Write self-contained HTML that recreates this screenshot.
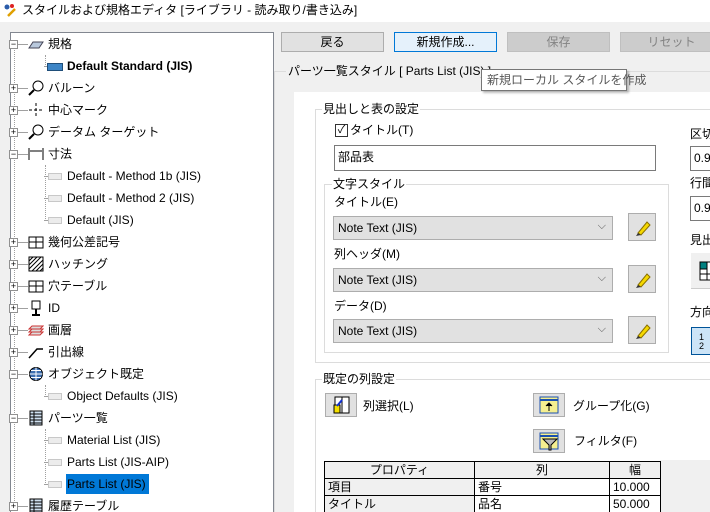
<!DOCTYPE html>
<html><head><meta charset="utf-8"><style>
*{box-sizing:border-box;margin:0;padding:0}
html,body{width:710px;height:512px;overflow:hidden}
body{background:#f0f0f0;font-family:"Liberation Sans","Noto Sans CJK JP",sans-serif;font-size:12px;color:#000;position:relative}
.a{position:absolute;white-space:nowrap;line-height:18px}
.tree{position:absolute;left:10px;top:32px;width:264px;height:480px;background:#fff;border:1px solid #828790;border-bottom:none}
.pm{position:absolute;width:9px;height:9px;border:1px solid #919191;background:#fff;font-size:9px;line-height:7px;text-align:center;color:#000}
.vl{position:absolute;border-left:1px dotted #a0a0a0}
.hl{position:absolute;border-top:1px solid #a0a0a0;height:0}
.leaf{position:absolute;width:14px;height:7px;border:1px solid #c8c8c8;background:#ececec}
.btn{position:absolute;top:32px;height:20px;border:1px solid #adadad;background:#e1e1e1;text-align:center;line-height:18px}
.cb{position:absolute;height:24px;border:1px solid #adadad;background:#e1e1e1;line-height:22px;padding-left:4px}
.cb:after{content:"⌵";position:absolute;right:6px;top:-2px;color:#555;font-size:11px}
.pb{position:absolute;width:28px;height:28px;border:1px solid #adadad;background:#e1e1e1}
.inp{position:absolute;border:1px solid #7a7a7a;background:#fff;line-height:22px;padding-left:3px}
.grp{position:absolute;border:1px solid #dcdcdc}
.lab{position:absolute;background:#fff;padding:0 1px;white-space:nowrap;line-height:16px}
td{border:1px solid #000;height:17px;line-height:15px;padding:0 3px;font-size:12px}
</style></head><body>
<div class="a" style="left:0;top:0;width:710px;height:22px;background:#fff"></div>
<div class="a" style="left:3px;top:3px;width:14px;height:14px"><svg width="14" height="14"><circle cx="4" cy="4" r="2.5" fill="#2a5caa"/><circle cx="9" cy="3" r="2" fill="#d22"/><path d="M5 13 L12 6" stroke="#e0a000" stroke-width="2.5"/></svg></div>
<div class="a" style="left:22px;top:1px;font-size:12px">スタイルおよび規格エディタ [ライブラリ - 読み取り/書き込み]</div>

<div class="tree">
<div class="vl" style="left:3px;top:12px;height:478px"></div>
<div class="vl" style="left:34px;top:22px;height:12px"></div>
<div class="vl" style="left:34px;top:132px;height:56px"></div>
<div class="vl" style="left:34px;top:352px;height:12px"></div>
<div class="vl" style="left:34px;top:396px;height:56px"></div>
</div>
<div id="t"></div>
<script>
var rows=[
[44,0,'m','規格','std'],[66,1,'','<b>Default Standard (JIS)</b>','blue'],[88,0,'p','バルーン','bal'],[110,0,'p','中心マーク','cm'],[132,0,'p','データム ターゲット','bal'],[154,0,'m','寸法','dim'],
[176,1,'','Default - Method 1b (JIS)'],[198,1,'','Default - Method 2 (JIS)'],[220,1,'','Default (JIS)'],[242,0,'p','幾何公差記号','g'],[264,0,'p','ハッチング','h'],[286,0,'p','穴テーブル','g'],[308,0,'p','ID','id'],[330,0,'p','画層','ly'],[352,0,'p','引出線','ld'],[374,0,'m','オブジェクト既定','gl'],[396,1,'','Object Defaults (JIS)'],[418,0,'m','パーツ一覧','pl'],[440,1,'','Material List (JIS)'],[462,1,'','Parts List (JIS-AIP)'],[484,1,'','Parts List (JIS)','sel'],[506,0,'p','履歴テーブル','pl']];
var h='';
rows.forEach(function(r){var y=r[0];
if(r[1]==0){h+='<div class="pm" style="left:9px;top:'+(y-4)+'px">'+(r[2]=='m'?'−':'+')+'</div><div class="hl" style="left:18px;top:'+y+'px;width:10px"></div>';
h+='<div class="a" style="left:28px;top:'+(y-8)+'px;width:16px;height:16px">'+icon(r[4])+'</div><div class="a" style="left:48px;top:'+(y-9)+'px">'+r[3]+'</div>';}
else{h+='<div class="hl" style="left:44px;top:'+y+'px;width:10px"></div>';
if(r[4]=='blue')h+='<div class="leaf" style="left:47px;top:'+(y-3)+'px;width:16px;height:8px;background:#3d85c6;border-color:#1f4e79"></div>';else h+='<div class="leaf" style="left:48px;top:'+(y-3)+'px"></div>';
if(r[4]=='sel')h+='<div class="a" style="left:66px;top:'+(y-10)+'px;width:83px;height:20px;background:#0078d7"></div><div class="a" style="left:67px;top:'+(y-9)+'px;color:#000">'+r[3]+'</div>';else h+='<div class="a" style="left:67px;top:'+(y-9)+'px">'+r[3]+'</div>';}
});
function icon(k){
if(k=='std')return '<svg width="16" height="16"><path d="M1 12 L5 6 L15 6 L11 12Z" fill="#b8c8dc" stroke="#445"/></svg>';
if(k=='bal')return '<svg width="16" height="16"><circle cx="10" cy="6" r="5" fill="#fff" stroke="#000"/><path d="M6 10 L1 15" stroke="#000" stroke-width="2"/></svg>';
if(k=='cm')return '<svg width="16" height="16"><path d="M8 1V15M1 8H15" stroke="#000" stroke-dasharray="3 2"/></svg>';
if(k=='dim')return '<svg width="16" height="16"><path d="M1 2V14M15 2V14M2 5H14" stroke="#000"/></svg>';
if(k=='g')return '<svg width="16" height="16"><rect x="1" y="3" width="14" height="11" fill="#fff" stroke="#000"/><path d="M8 3V14M1 8H15" stroke="#000"/></svg>';
if(k=='h')return '<svg width="16" height="16"><rect x="1" y="1" width="14" height="14" fill="#fff" stroke="#000"/><path d="M1 5L5 1M1 9L9 1M1 13L13 1M4 15L15 4M8 15L15 8M12 15L15 12" stroke="#000"/></svg>';
if(k=='id')return '<svg width="16" height="16"><rect x="4" y="1" width="8" height="8" fill="#fff" stroke="#000"/><path d="M8 9V14M4 15H12" stroke="#000" stroke-width="2"/></svg>';
if(k=='ly')return '<svg width="16" height="16"><path d="M1 13L4 10H15L12 13Z M1 10L4 7H15L12 10Z M1 7L4 4H15L12 7Z" fill="#ddd" stroke="#c33"/></svg>';
if(k=='ld')return '<svg width="16" height="16"><path d="M1 14L9 5H15" stroke="#000" stroke-width="1.5" fill="none"/></svg>';
if(k=='gl')return '<svg width="16" height="16"><circle cx="8" cy="8" r="6.5" fill="#3d6fb0" stroke="#000"/><path d="M1.5 8H14.5M8 1.5V14.5M3 4.5H13M3 11.5H13" stroke="#fff"/></svg>';
if(k=='pl')return '<svg width="16" height="16"><rect x="2" y="1" width="12" height="14" fill="#cfe0f0" stroke="#000"/><path d="M2 4H14M2 7H14M2 10H14M2 13H14M6 1V15" stroke="#000"/></svg>';
return '';}
document.getElementById('t').innerHTML=h;
</script>

<div class="btn" style="left:281px;width:103px">戻る</div>
<div class="btn" style="left:394px;width:103px;background:#e5f1fb;border-color:#0078d7">新規作成...</div>
<div class="btn" style="left:507px;width:103px;background:#ccc;border-color:#bfbfbf;color:#838383">保存</div>
<div class="btn" style="left:620px;width:103px;background:#ccc;border-color:#bfbfbf;color:#838383">リセット</div>

<div class="a" style="left:274px;top:71px;width:436px;border-top:1px solid #dcdcdc"></div>
<div class="a" style="left:274px;top:71px;height:441px;border-left:1px solid #dcdcdc"></div>
<div class="a" style="left:286px;top:63px;background:#f0f0f0;padding:0 2px;line-height:16px">パーツ一覧スタイル [ Parts List (JIS) ]</div>
<div class="a" style="left:294px;top:92px;width:416px;height:420px;background:#fff"></div>

<div class="grp" style="left:315px;top:109px;width:400px;height:254px"></div>
<div class="lab" style="left:322px;top:101px">見出しと表の設定</div>
<div class="a" style="left:335px;top:124px;width:13px;height:13px;border:1px solid #333;background:#fff;font-size:11px;line-height:11px;text-align:center">✓</div>
<div class="a" style="left:350px;top:121px">タイトル(T)</div>
<div class="inp" style="left:334px;top:145px;width:322px;height:26px">部品表</div>
<div class="grp" style="left:324px;top:184px;width:345px;height:169px"></div>
<div class="lab" style="left:332px;top:176px">文字スタイル</div>
<div class="a" style="left:334px;top:193px">タイトル(E)</div>
<div class="cb" style="left:333px;top:216px;width:280px">Note Text (JIS)</div>
<div class="a" style="left:334px;top:245px">列ヘッダ(M)</div>
<div class="cb" style="left:333px;top:268px;width:280px">Note Text (JIS)</div>
<div class="a" style="left:334px;top:297px">データ(D)</div>
<div class="cb" style="left:333px;top:319px;width:280px">Note Text (JIS)</div>
<div id="pens"></div>
<script>
var p='';[213,265,316].forEach(function(y){p+='<div class="pb" style="left:628px;top:'+y+'px"><svg width="26" height="26"><path d="M9 19 L18 8 L21 11 L12 21Z" fill="#f5d800" stroke="#8a7000"/><path d="M7 22 L9 19 L12 21Z" fill="#333"/></svg></div>'});document.getElementById('pens').innerHTML=p;
</script>

<div class="a" style="left:690px;top:125px">区切</div>
<div class="inp" style="left:690px;top:146px;width:30px;height:25px">0.9</div>
<div class="a" style="left:690px;top:174px">行間</div>
<div class="inp" style="left:690px;top:196px;width:30px;height:25px">0.9</div>
<div class="a" style="left:690px;top:231px">見出</div>
<div class="a" style="left:691px;top:253px;width:30px;height:36px;background:#f0f0f0;border-bottom:1px solid #ccc"><svg width="30" height="36"><rect x="9" y="9" width="14" height="18" fill="#fff" stroke="#000"/><rect x="9" y="9" width="7" height="7" fill="#008080" stroke="#000"/><path d="M9 21H23M16 9V27" stroke="#000"/></svg></div>
<div class="a" style="left:690px;top:303px">方向</div>
<div class="a" style="left:691px;top:327px;width:30px;height:28px;background:#cce4f7;border:1px solid #005499;font-size:9px;line-height:9px;padding:5px 0 0 7px">1<br>2</div>

<div class="grp" style="left:315px;top:379px;width:400px;height:140px"></div>
<div class="lab" style="left:322px;top:371px">既定の列設定</div>
<div class="pb" style="left:325px;top:393px;width:32px;height:24px"><svg width="30" height="22"><rect x="9" y="3" width="14" height="16" fill="#fff" stroke="#000"/><path d="M16 3V19" stroke="#000"/><rect x="8" y="11" width="6" height="8" fill="#f5e000" stroke="#000"/><path d="M11 12L16 6" stroke="#1030d0" stroke-width="2"/></svg></div>
<div class="a" style="left:363px;top:397px">列選択(L)</div>
<div class="pb" style="left:533px;top:393px;width:32px;height:24px"><svg width="30" height="22"><rect x="6" y="3" width="18" height="16" fill="#f5ef90" stroke="#1a50b0"/><path d="M6 6H24" stroke="#1a50b0" stroke-width="2"/><path d="M15 17V9M12 12L15 9L18 12" stroke="#000"/></svg></div>
<div class="a" style="left:573px;top:397px">グループ化(G)</div>
<div class="pb" style="left:533px;top:429px;width:32px;height:24px"><svg width="30" height="22"><rect x="6" y="3" width="18" height="16" fill="#f5ef90" stroke="#1a50b0"/><path d="M6 6H24" stroke="#1a50b0" stroke-width="2"/><path d="M9 9H23L17 15V20H15V15Z" fill="#bbb" stroke="#000"/></svg></div>
<div class="a" style="left:574px;top:432px">フィルタ(F)</div>
<div class="a" style="left:660px;top:460px;width:50px;height:52px;background:#f0f0f0"></div>
<table class="a" style="left:324px;top:461px;border-collapse:collapse;width:337px;background:#fff">
<tr style="background:#f0f0f0;text-align:center"><td style="width:150px">プロパティ</td><td style="width:135px">列</td><td>幅</td></tr>
<tr><td style="background:#f0f0f0">項目</td><td>番号</td><td>10.000</td></tr>
<tr><td style="background:#f0f0f0">タイトル</td><td>品名</td><td>50.000</td></tr>
<tr><td style="background:#f0f0f0">&nbsp;</td><td></td><td></td></tr>
</table>

<div class="a" style="left:481px;top:69px;width:146px;height:22px;background:#fff;border:1px solid #767676;box-shadow:2px 2px 2px rgba(0,0,0,.25);line-height:20px;padding-left:5px;color:#575757">新規ローカル スタイルを作成</div>
</body></html>
